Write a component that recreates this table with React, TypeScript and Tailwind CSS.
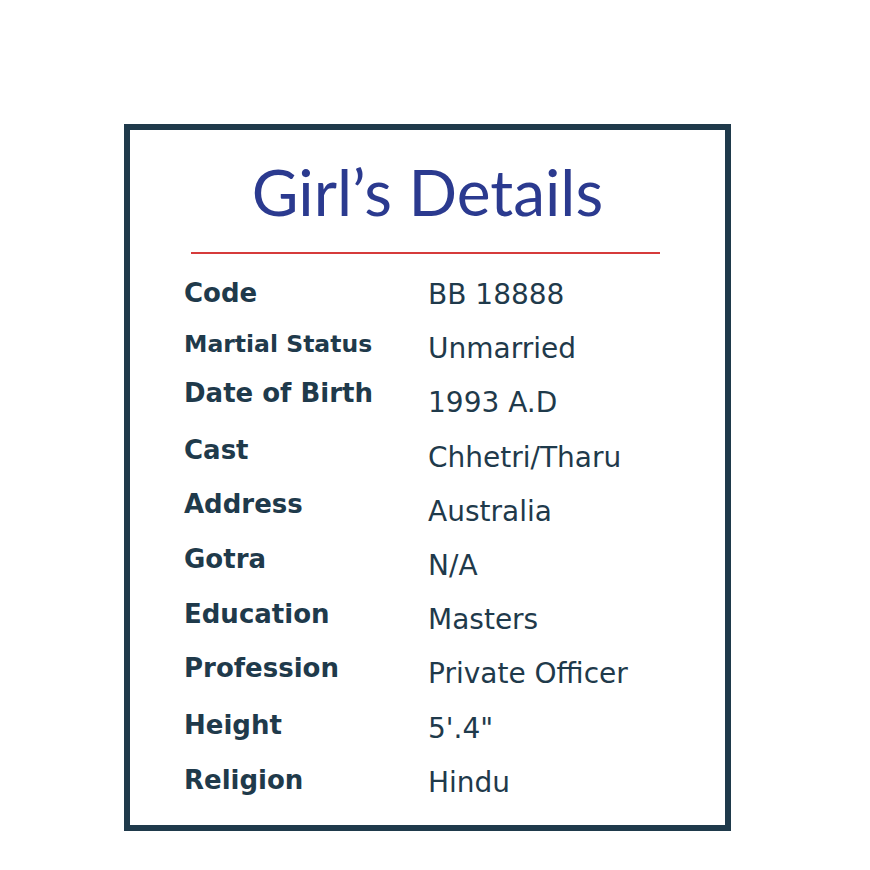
const rows: { label: string; value: string; cls: string }[] = [
  { label: "Code", value: "BB 18888", cls: "pt-[9px] text-[26px]" },
  { label: "Martial Status", value: "Unmarried", cls: "pt-[8px] text-[23.5px]" },
  { label: "Date of Birth", value: "1993 A.D", cls: "pt-[1px] text-[26px]" },
  { label: "Cast", value: "Chhetri/Tharu", cls: "pt-[3px] text-[26px]" },
  { label: "Address", value: "Australia", cls: "pt-[3px] text-[26px]" },
  { label: "Gotra", value: "N/A", cls: "pt-[4px] text-[26px]" },
  { label: "Education", value: "Masters", cls: "pt-[5px] text-[26px]" },
  { label: "Profession", value: "Private Officer", cls: "pt-[5px] text-[26px]" },
  { label: "Height", value: "5'.4\"", cls: "pt-[7px] text-[26px]" },
  { label: "Religion", value: "Hindu", cls: "pt-[8px] text-[26px]" },
];

export default function App() {
  return (
    <div className="w-[870px] h-[870px] bg-white pt-[124px] pl-[124px]">
      <div className="w-[607px] h-[707px] border-[6px] border-[#1f3a4b] flex flex-col">
        <h1 className="mt-[30px] text-center text-[64px] leading-none font-normal text-[#2b3a8f] font-['Lato',sans-serif]">
          Girl’s Details
        </h1>
        <div className="mt-[28px] ml-[61px] w-[469px] h-[2px] bg-[#d63b3b]" />
        <div className="mt-[17px] flex flex-col font-['DejaVu_Sans',sans-serif] text-[#1f3a4b]">
          {rows.map(({ label, value, cls }) => (
            <div key={label} className="h-[54.2px] flex items-start">
              <div className={`w-[298px] pl-[54px] font-bold leading-none ${cls}`}>{label}</div>
              <div className="pt-[10px] text-[28px] leading-none font-normal">{value}</div>
            </div>
          ))}
        </div>
      </div>
    </div>
  );
}
